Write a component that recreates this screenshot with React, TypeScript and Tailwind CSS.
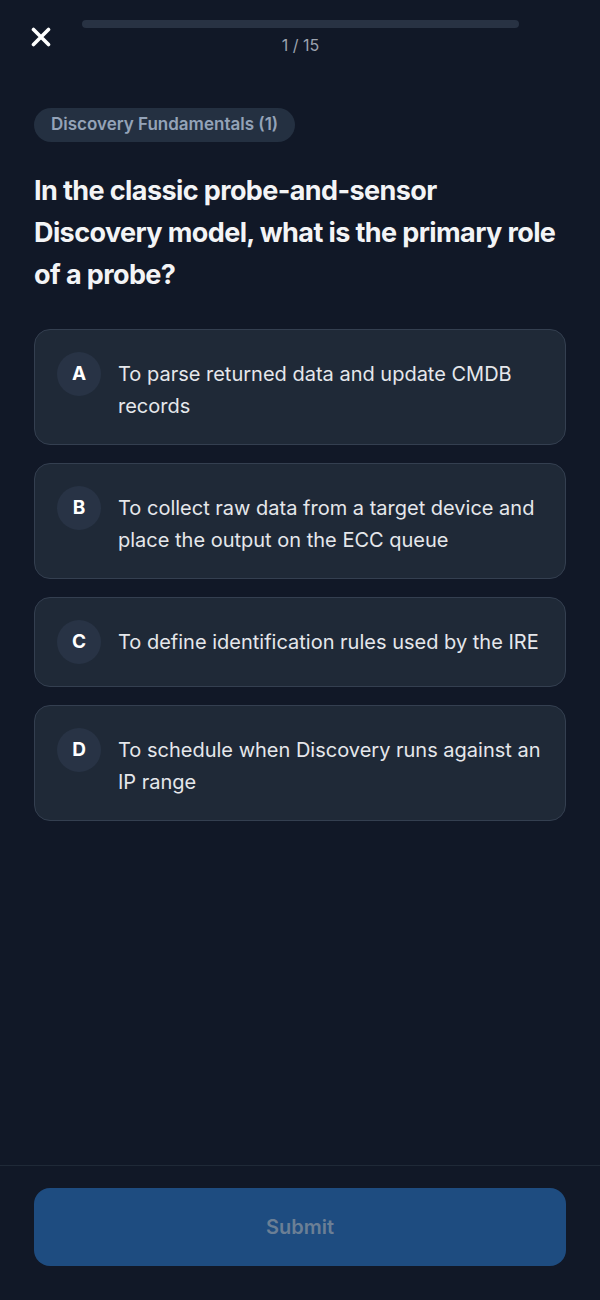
import React, { useState } from 'react';

const options = [
  { key: 'A', text: 'To parse returned data and update CMDB records' },
  { key: 'B', text: 'To collect raw data from a target device and place the output on the ECC queue' },
  { key: 'C', text: 'To define identification rules used by the IRE' },
  { key: 'D', text: 'To schedule when Discovery runs against an IP range' },
];

const font = { fontFamily: 'Inter, "Noto Sans", sans-serif' };

export default function App() {
  const [selected, setSelected] = useState<string | null>(null);

  return (
    <div className="w-[600px] h-[1300px] bg-[#111827] flex flex-col" style={font}>
      {/* Header */}
      <div className="flex items-start px-[31px] pt-[20px]">
        <button className="w-[20px] h-[20px] mt-[7px] text-white">
          <svg viewBox="0 0 20 20" className="w-[20px] h-[20px]">
            <path d="M2.5 2.5 L17.5 17.5 M17.5 2.5 L2.5 17.5" stroke="currentColor" strokeWidth="3.6" strokeLinecap="round" />
          </svg>
        </button>
        <div className="flex-1 flex flex-col items-center ml-[31px] mr-[50px]">
          <div className="w-full h-[8px] rounded-full bg-[#283243]" />
          <div className="mt-[7px] text-[16px] leading-[20px] text-[#9ca3af]">1 / 15</div>
        </div>
      </div>

      {/* Body */}
      <div className="flex-1 flex flex-col px-[34px] pt-[53px]">
        <div className="self-start h-[34px] px-[17px] rounded-full bg-[#243041] flex items-center text-[17px] font-semibold text-[#94a3b8]">
          Discovery Fundamentals (1)
        </div>

        <h1 className="mt-[28px] text-[27px] leading-[42px] font-bold text-[#f3f4f6] tracking-[-0.6px]">
          In the classic probe-and-sensor Discovery model, what is the primary role of a probe?
        </h1>

        <div className="mt-[33px] flex flex-col gap-[18px]">
          {options.map((o) => (
            <button
              key={o.key}
              onClick={() => setSelected(o.key)}
              className={`flex items-start gap-[17px] text-left rounded-[16px] border p-[22px] ${
                selected === o.key ? 'border-[#3b82f6] bg-[#1e293b]' : 'border-[#343f50] bg-[#1f2937]'
              }`}
            >
              <div className="w-[44px] h-[44px] shrink-0 rounded-full bg-[#283345] flex items-center justify-center text-[19px] font-bold text-white">
                {o.key}
              </div>
              <div className="pt-[6px] text-[20px] leading-[32px] text-[#e5e7eb]">{o.text}</div>
            </button>
          ))}
        </div>
      </div>

      {/* Footer */}
      <div className="border-t border-[#1f2937] px-[34px] pt-[22px] pb-[34px]">
        <button className="w-full h-[78px] rounded-[16px] bg-[#1e4c80] text-[20px] font-semibold text-[#6b7f95]">
          Submit
        </button>
      </div>
    </div>
  );
}
